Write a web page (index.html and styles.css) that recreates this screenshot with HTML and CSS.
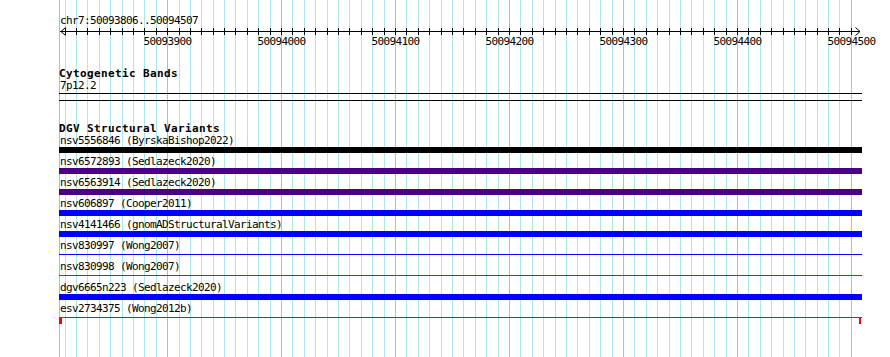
FILE: index.html
```html
<!DOCTYPE html>
<html lang="en">
<head>
    <meta charset="UTF-8">
    <title>chr7:50093806..50094507</title>
    <link rel="stylesheet" href="styles.css">
</head>
<body>
    <div class="page">
        <svg class="guides" id="guides" width="890" height="357"></svg>
        <div class="browser">
            <div class="position">chr7:50093806..50094507</div>
            <svg class="ruler" id="ruler" width="803" height="21">
                <rect class="axis" x="1" y="5" width="800" height="1"></rect>
                <polyline class="arrow" points="6.5,1.5 2,5.5 6.5,9.5"></polyline>
                <polyline class="arrow" points="796.5,1.5 801,5.5 796.5,9.5"></polyline>
            </svg>

            <div class="track">
                <div class="track-title">Cytogenetic Bands</div>
                <div class="label">7p12.2</div>
                <div class="band"></div>
            </div>

            <div class="track dgv">
                <div class="track-title">DGV Structural Variants</div>
                <div class="item">
                    <div class="label">nsv5556846 (ByrskaBishop2022)</div>
                    <div class="lane"><div class="bar complex"></div></div>
                </div>
                <div class="item">
                    <div class="label">nsv6572893 (Sedlazeck2020)</div>
                    <div class="lane"><div class="bar mixed"></div></div>
                </div>
                <div class="item">
                    <div class="label">nsv6563914 (Sedlazeck2020)</div>
                    <div class="lane"><div class="bar mixed"></div></div>
                </div>
                <div class="item">
                    <div class="label">nsv606897 (Cooper2011)</div>
                    <div class="lane"><div class="bar gain"></div></div>
                </div>
                <div class="item">
                    <div class="label">nsv4141466 (gnomADStructuralVariants)</div>
                    <div class="lane"><div class="bar gain"></div></div>
                </div>
                <div class="item">
                    <div class="label">nsv830997 (Wong2007)</div>
                    <div class="lane"><div class="line gain"></div></div>
                </div>
                <div class="item">
                    <div class="label">nsv830998 (Wong2007)</div>
                    <div class="lane"><div class="line loss"></div></div>
                </div>
                <div class="item">
                    <div class="label">dgv6665n223 (Sedlazeck2020)</div>
                    <div class="lane"><div class="bar gain"></div></div>
                </div>
                <div class="item">
                    <div class="label">esv2734375 (Wong2012b)</div>
                    <div class="lane ends">
                        <div class="line loss"></div>
                        <span class="end left loss"></span>
                        <span class="end right loss"></span>
                    </div>
                </div>
            </div>
        </div>
    </div>
    <script>
        var start = 50093806; // first base in view
        var ppb = 800 / 702; // pixels per base
        var ns = 'http://www.w3.org/2000/svg';
        var guides = document.getElementById('guides');
        var ruler = document.getElementById('ruler');

        function xOf(bp) {
            return Math.round(60 + (bp - start) * ppb);
        }

        function rect(svg, x, y, w, h, cls) {
            var r = document.createElementNS(ns, 'rect');
            r.setAttribute('x', x);
            r.setAttribute('y', y);
            r.setAttribute('width', w);
            r.setAttribute('height', h);
            r.setAttribute('class', cls);
            svg.appendChild(r);
        }

        rect(guides, 59, 0, 1, 357, 'major');

        for (var bp = 50093810; bp <= 50094507; bp += 10) {
            var x = xOf(bp);
            if (x > 860) break;
            var major = bp % 100 == 0;
            rect(guides, x, 0, 1, 357, major ? 'major' : 'minor');
            rect(ruler, x - 59, 2, 1, 7, 'tick');
            if (major) {
                var t = document.createElementNS(ns, 'text');
                t.setAttribute('x', x - 59 + 0.5);
                t.setAttribute('y', 18.5);
                t.setAttribute('class', 'tick-label');
                t.textContent = bp;
                ruler.appendChild(t);
            }
        }
    </script>
</body>
</html>
```

FILE: styles.css
```css
body {
    margin: 0;
    background-color: #fff;
}
.page {
    position: relative;
    width: 890px;
    height: 357px;
    overflow: hidden;
}
.guides {
    position: absolute;
    left: 0;
    top: 0;
    shape-rendering: crispEdges;
}
.minor {
    fill: #ade6ec;
}
.major {
    fill: #93c5e2;
}
.browser {
    position: relative;
    margin-left: 59px;
    width: 803px;
    padding-top: 15px;
    font-family: "DejaVu Sans Mono", monospace;
    font-size: 11px;
    line-height: 11px;
    letter-spacing: -0.62px;
    color: #000;
}
.position, .label {
    height: 11px;
    padding-left: 1px;
    white-space: nowrap;
}
.ruler {
    display: block;
    overflow: visible;
    shape-rendering: crispEdges;
}
.axis, .tick {
    fill: #000;
}
.arrow {
    fill: none;
    stroke: #000;
    stroke-width: 1;
    shape-rendering: auto;
}
.tick-label {
    font-family: "DejaVu Sans Mono", monospace;
    font-size: 11px;
    letter-spacing: -0.62px;
    text-anchor: middle;
    fill: #000;
}
.track {
    margin-top: 21px;
}
.track.dgv {
    margin-top: 22px;
}
.track-title {
    font-weight: bold;
    font-size: 11px;
    line-height: 12px;
    letter-spacing: 0.38px;
    white-space: nowrap;
}
.band {
    height: 6px;
    margin-top: 2px;
    border-top: 1px solid #000;
    border-bottom: 1px solid #000;
}
.item {
    height: 21px;
}
.lane {
    position: relative;
    height: 10px;
}
.bar {
    height: 6px;
    margin-top: 1px;
}
.line {
    height: 1px;
    margin-top: 3px;
}
.end {
    position: absolute;
    top: 1px;
    width: 2px;
    height: 6px;
}
.end.left {
    left: 0;
    width: 3px;
}
.end.right {
    left: 800px;
}
.complex {
    background-color: #000;
}
.mixed {
    background-color: #4b0082;
}
.gain {
    background-color: #0000ff;
}
.loss {
    background-color: #ff0000;
}
```
